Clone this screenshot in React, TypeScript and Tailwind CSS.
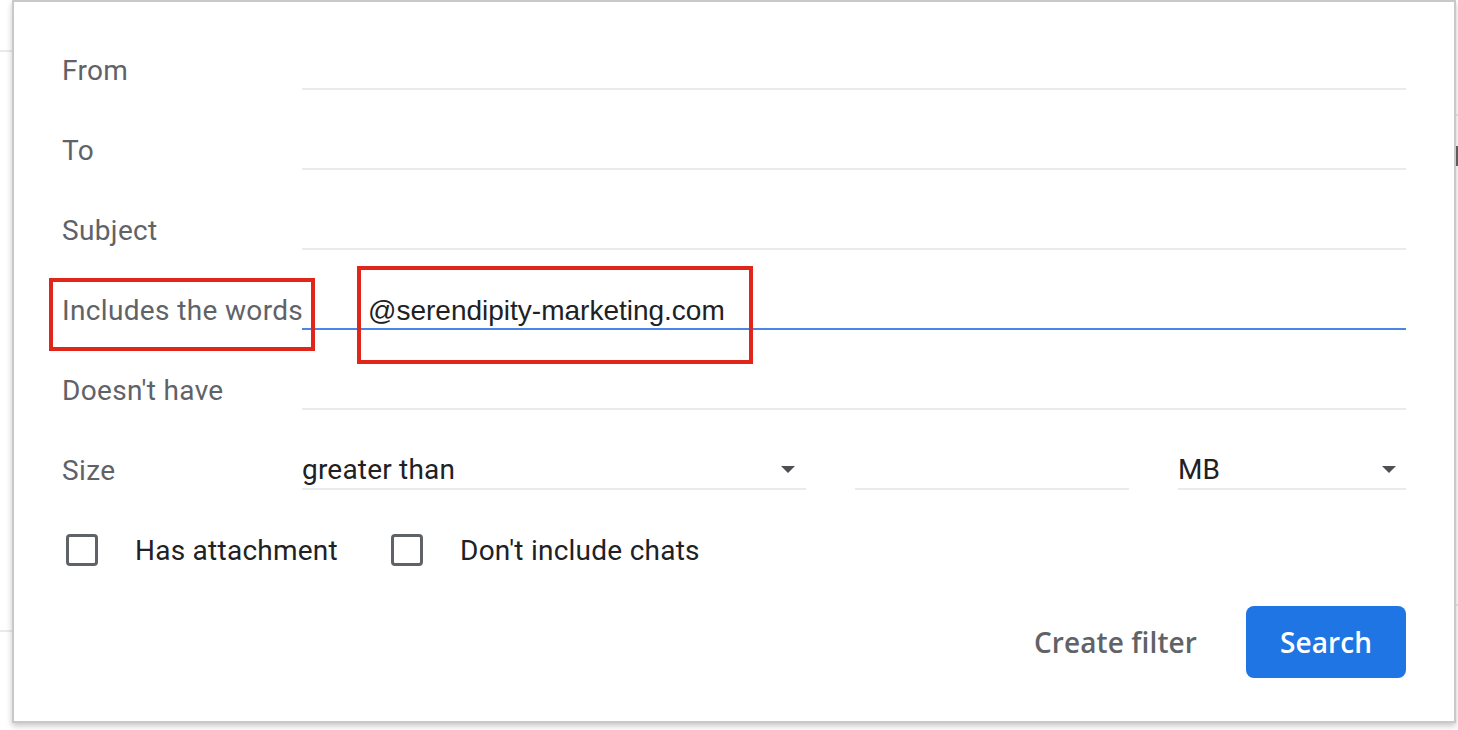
import React from "react";

const labelCls =
  "w-[240px] shrink-0 whitespace-nowrap pt-[2px] text-[28px] tracking-[0.35px] text-[#5f6368] font-['Roboto',sans-serif]";

function Field({ label, value, active }: { label: string; value?: string; active?: boolean }) {
  return (
    <div className="flex h-[80px] items-center">
      <div className={labelCls}>{label}</div>
      <div
        className={
          "flex h-[40px] flex-1 items-center border-b-2 " +
          (active ? "border-[#4a86e8]" : "border-[#e8ebee]")
        }
      >
        {value ? (
          <span className="pl-[66px] pt-[4px] text-[28px] text-[#202124] font-['Liberation_Sans',Arial,sans-serif]">
            {value}
          </span>
        ) : null}
      </div>
    </div>
  );
}

function Arrow() {
  return (
    <svg width="14" height="7" viewBox="0 0 14 7" className="shrink-0">
      <path d="M0 0 L14 0 L7 7 Z" fill="#4d4f53" />
    </svg>
  );
}

function Checkbox({ label }: { label: string }) {
  return (
    <div className="flex items-center">
      <div className="h-[32px] w-[32px] rounded-[4px] border-[3px] border-[#5f6368]" />
      <span className="ml-[37px] whitespace-nowrap pt-[2px] text-[28px] tracking-[0.25px] text-[#202124] font-['Roboto',sans-serif]">
        {label}
      </span>
    </div>
  );
}

export default function App() {
  return (
    <div className="relative h-[730px] w-[1458px] overflow-hidden bg-white">
      {/* background page hints */}
      <div className="absolute left-0 top-[50px] h-[2px] w-[12px] bg-[#e8ebee]" />
      <div className="absolute left-0 top-[630px] h-[2px] w-[12px] bg-[#e8ebee]" />
      <div className="absolute right-0 top-[114px] h-[2px] w-[4px] bg-[#e8ebee]" />
      <div className="absolute right-0 top-[146px] h-[20px] w-[2px] bg-[#666]" />
      <div className="absolute right-0 top-[604px] h-[2px] w-[4px] bg-[#e8ebee]" />

      <div className="relative ml-[12px] h-[723px] w-[1444px] border-2 border-[#c9c9c9] bg-white px-[48px] pt-[28px] shadow-[0_3px_6px_rgba(0,0,0,0.22)]">
        <Field label="From" />
        <Field label="To" />
        <Field label="Subject" />
        <Field label="Includes the words" value="@serendipity-marketing.com" active />
        <Field label="Doesn't have" />

        <div className="flex h-[80px] items-center">
          <div className={labelCls}>Size</div>
          <div className="flex flex-1 items-center gap-[49px]">
            <div className="flex h-[40px] w-[504px] items-center justify-between border-b-2 border-[#e8ebee] pr-[11px]">
              <span className="pt-[2px] text-[28px] tracking-[0.2px] text-[#202124] font-['Roboto',sans-serif]">
                greater than
              </span>
              <Arrow />
            </div>
            <div className="h-[40px] w-[274px] border-b-2 border-[#e8ebee]" />
            <div className="flex h-[40px] flex-1 items-center justify-between border-b-2 border-[#e8ebee] pr-[10px]">
              <span className="pt-[2px] text-[28px] text-[#202124] font-['Roboto',sans-serif]">MB</span>
              <Arrow />
            </div>
          </div>
        </div>

        <div className="flex h-[80px] items-center gap-[53px] pl-[4px]">
          <Checkbox label="Has attachment" />
          <Checkbox label="Don't include chats" />
        </div>

        <div className="mt-[16px] flex items-center justify-end">
          <span className="text-[28px] font-semibold tracking-[0.1px] text-[#5f6368] font-['Open_Sans',sans-serif]">
            Create filter
          </span>
          <button className="ml-[49px] flex h-[72px] w-[160px] items-center justify-center rounded-[8px] bg-[#1f75e4] text-[28px] font-semibold tracking-[0.1px] text-white font-['Open_Sans',sans-serif]">
            Search
          </button>
        </div>

        {/* annotation boxes */}
        <div className="absolute left-[35px] top-[276px] h-[73px] w-[266px] border-[4px] border-[#e0261b]" />
        <div className="absolute left-[343px] top-[264px] h-[98px] w-[396px] border-[4px] border-[#e0261b]" />
      </div>
    </div>
  );
}
